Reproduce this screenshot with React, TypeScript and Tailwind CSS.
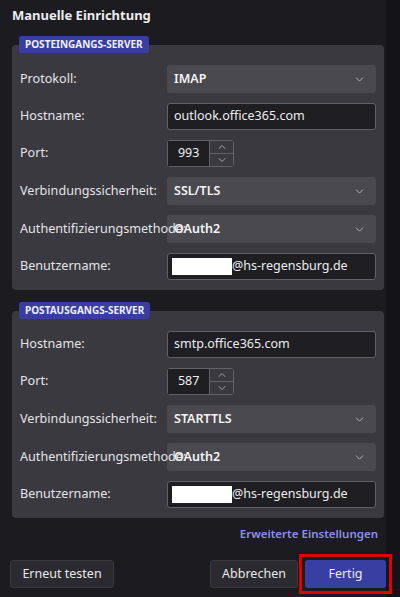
import React from 'react';
import { ChevronDown, ChevronUp } from 'lucide-react';

const font = { fontFamily: '"Noto Sans", "Open Sans", sans-serif' };

const Label: React.FC<{ text: string }> = ({ text }) => (
  <div className="relative z-10 w-[147px] shrink-0 whitespace-nowrap text-[12.6px] text-[#e4e4e7]">{text}</div>
);

const Select: React.FC<{ value: string }> = ({ value }) => (
  <div className="flex h-[28px] w-[209px] items-center justify-between rounded-[3px] bg-[#4a494f] pl-[7px] pr-[10px]">
    <span className="text-[12.5px] font-semibold text-[#f4f4f5]">{value}</span>
    <ChevronDown size={13} strokeWidth={1.5} className="text-[#c8c8cc]" />
  </div>
);

const Input: React.FC<{ value: string }> = ({ value }) => (
  <div className="flex h-[27px] w-[209px] items-center rounded-[3px] border border-[#626168] bg-[#1f1e23] px-[6px] text-[12.5px] text-[#ececee]">
    {value}
  </div>
);

const UserInput: React.FC = () => (
  <div className="flex h-[27px] w-[209px] items-center rounded-[3px] border border-[#626168] bg-[#1f1e23] pl-[4px] text-[12.5px] text-[#ececee]">
    <span className="h-[17px] w-[60px] bg-white" />
    <span>@hs-regensburg.de</span>
  </div>
);

const Port: React.FC<{ value: string }> = ({ value }) => (
  <div className="flex h-[27px] w-[67px] rounded-[3px] border border-[#626168]">
    <div className="flex w-[42px] items-center justify-center bg-[#1f1e23] text-[12.5px] text-[#ececee]">{value}</div>
    <div className="flex w-[24px] flex-col border-l border-[#626168] bg-[#3a393f]">
      <div className="flex flex-1 items-center justify-center border-b border-[#626168]">
        <ChevronUp size={12} strokeWidth={1.5} className="text-[#c8c8cc]" />
      </div>
      <div className="flex flex-1 items-center justify-center">
        <ChevronDown size={12} strokeWidth={1.5} className="text-[#c8c8cc]" />
      </div>
    </div>
  </div>
);

const Row: React.FC<{ label: string; children: React.ReactNode }> = ({ label, children }) => (
  <div className="flex items-center">
    <Label text={label} />
    {children}
  </div>
);

const Section: React.FC<{ title: string; children: React.ReactNode }> = ({ title, children }) => (
  <div className="flex flex-col">
    <div className="relative z-10 ml-[7px] flex h-[17px] w-fit items-center rounded-[3px] bg-[#383d9f] px-[6px] text-[10px] font-bold text-[#eef0ff]">
      {title}
    </div>
    <div className="-mt-[8px] flex flex-col gap-[10px] rounded-[4px] bg-[#3a393f] pb-[10px] pl-[8px] pr-[8px] pt-[20px]">
      {children}
    </div>
  </div>
);

const App: React.FC = () => {
  return (
    <div className="flex h-[597px] w-[400px] overflow-hidden bg-[#141418]" style={font}>
      <div className="flex w-[386px] shrink-0 flex-col bg-[#1c1b20] pl-[12px] pr-[2px]">
        <h1 className="flex h-[26px] items-center pt-[6px] text-[13px] font-bold text-[#ececee]">Manuelle Einrichtung</h1>

        <div className="mt-[10px] flex flex-col gap-[12px]">
          <Section title="POSTEINGANGS-SERVER">
            <Row label="Protokoll:"><Select value="IMAP" /></Row>
            <Row label="Hostname:"><Input value="outlook.office365.com" /></Row>
            <Row label="Port:"><Port value="993" /></Row>
            <Row label="Verbindungssicherheit:"><Select value="SSL/TLS" /></Row>
            <Row label="Authentifizierungsmethode:"><Select value="OAuth2" /></Row>
            <Row label="Benutzername:"><UserInput /></Row>
          </Section>

          <Section title="POSTAUSGANGS-SERVER">
            <Row label="Hostname:"><Input value="smtp.office365.com" /></Row>
            <Row label="Port:"><Port value="587" /></Row>
            <Row label="Verbindungssicherheit:"><Select value="STARTTLS" /></Row>
            <Row label="Authentifizierungsmethode:"><Select value="OAuth2" /></Row>
            <Row label="Benutzername:"><UserInput /></Row>
          </Section>
        </div>

        <div className="mt-[7px] flex justify-end pr-[6px]">
          <span className="text-[11.5px] font-semibold text-[#8b8ff0]">Erweiterte Einstellungen</span>
        </div>

        <div className="mt-[18px] -ml-[2px] -mr-[2px] flex items-center justify-between">
          <button className="h-[28px] w-[104px] rounded-[3px] border border-[#38373d] bg-[#2b2a30] text-[12.5px] text-[#e8e8ea]">
            Erneut testen
          </button>
          <div className="flex items-center gap-[7px]">
            <button className="h-[28px] w-[88px] rounded-[3px] border border-[#38373d] bg-[#2b2a30] text-[12.5px] text-[#e8e8ea]">
              Abbrechen
            </button>
            <div className="-my-[6px] -ml-[6px] -mr-[6px] border-[3px] border-[#e00000] p-[3px]">
              <button className="block h-[28px] w-[81px] rounded-[3px] bg-[#393ea3] text-[12.5px] text-[#e8e8f8]">
                Fertig
              </button>
            </div>
          </div>
        </div>
      </div>
      <div className="flex-1" />
    </div>
  );
};

export default App;
